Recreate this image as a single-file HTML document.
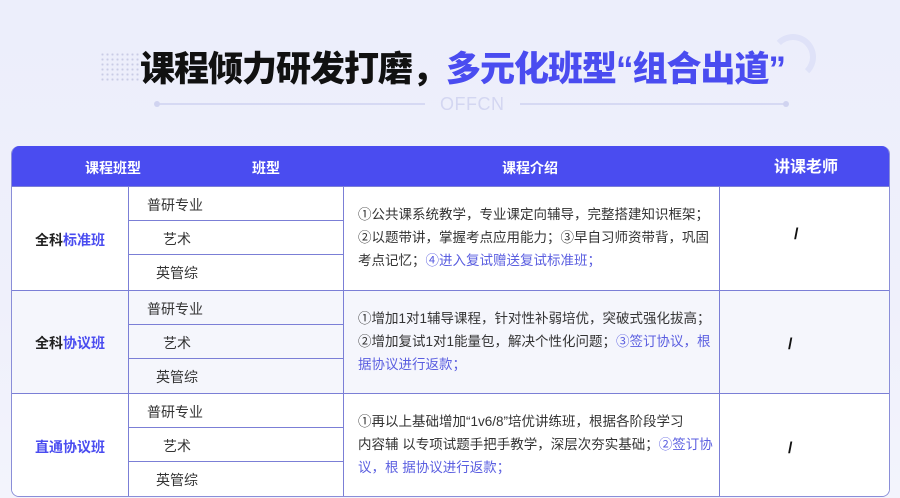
<!DOCTYPE html>
<html><head><meta charset="utf-8"><style>
*{margin:0;padding:0;box-sizing:border-box}
body{width:900px;height:498px;overflow:hidden;background:linear-gradient(180deg,#eceefb 0%,#eff0fb 60%,#f3f4fc 100%);font-family:"Liberation Sans","Noto Sans CJK SC",sans-serif;position:relative}
.title{position:absolute;left:140px;top:46px;white-space:nowrap;font-size:35px;font-weight:900;color:#111;letter-spacing:-1px;line-height:48px}
.title span{color:#4a4cf0}
.dots{position:absolute;left:100px;top:52px;width:40px;height:30px;background-image:radial-gradient(#c9cbe6 1px,transparent 1.2px);background-size:5px 5px}
.ring{position:absolute;left:770px;top:34px;width:46px;height:46px;border-radius:50%;border:6px solid #dfe2f8;border-left-color:transparent;border-bottom-color:transparent}
.line{position:absolute;top:103px;height:2px;background:#d6d9f3}
.dot{position:absolute;top:101px;width:6px;height:6px;border-radius:50%;background:#d0d3f0}
.offcn{position:absolute;left:440px;top:94px;font-size:18px;color:#d3d6f1;letter-spacing:0.5px}
.tbl{position:absolute;left:11px;top:146px;width:879px;height:351px;border-radius:8px;overflow:hidden;background:#fff;border:1px solid #8a8ed8;border-top:none}
.hd{position:absolute;left:0;top:0;width:879px;height:40px;background:#4a4cf0;color:#fff;font-weight:bold;font-size:14px}
.hd div{position:absolute;top:12px}
.row{position:absolute;left:0;width:879px;border-top:1px solid #7b7fd6}
.v{position:absolute;top:40px;bottom:0;width:1px;background:#7b7fd6}
.c1{position:absolute;left:0;width:116px;text-align:center;font-weight:bold;font-size:14px;color:#222}
.b{color:#4a4cf0}
.sub{position:absolute;left:116px;width:215px;height:34px;font-size:14px;color:#333;border-bottom:1px solid #7b7fd6}
.sub span{position:absolute;top:8px}
.intro{position:absolute;left:346px;font-size:13.5px;line-height:23px;color:#333;white-space:nowrap}
.intro .b{color:#5a5ee0}
.sl{position:absolute;font-size:16px;font-weight:bold;color:#111}
</style></head><body>
<div class="dots"></div><div class="ring"></div>
<div class="title">课程倾力研发打磨，<span>多元化班型“组合出道”</span></div>
<div class="line" style="left:157px;width:268px"></div><div class="dot" style="left:154px"></div>
<div class="line" style="left:520px;width:266px"></div><div class="dot" style="left:783px"></div>
<div class="offcn">OFFCN</div>
<div class="tbl">
<div class="hd"><div style="left:73px">课程班型</div><div style="left:240px">班型</div><div style="left:490px">课程介绍</div><div style="left:762px;font-size:16px;top:7px">讲课老师</div></div>
<div class="row" style="top:40px;height:104px;background:#fff"></div>
<div class="row" style="top:144px;height:103px;background:#f5f6fc"></div>
<div class="row" style="top:247px;height:104px;background:#fff"></div>
<div class="v" style="left:116px"></div><div class="v" style="left:331px"></div><div class="v" style="left:707px"></div>
<div class="c1" style="top:84px">全科<span class="b">标准班</span></div>
<div class="c1" style="top:187px">全科<span class="b">协议班</span></div>
<div class="c1 b" style="top:291px">直通协议班</div>
<div class="sub" style="top:41px"><span style="left:19px">普研专业</span></div>
<div class="sub" style="top:75px"><span style="left:35px">艺术</span></div>
<div class="sub" style="top:109px;border-bottom:none"><span style="left:28px">英管综</span></div>
<div class="sub" style="top:145px"><span style="left:19px">普研专业</span></div>
<div class="sub" style="top:179px"><span style="left:35px">艺术</span></div>
<div class="sub" style="top:213px;border-bottom:none"><span style="left:28px">英管综</span></div>
<div class="sub" style="top:248px"><span style="left:19px">普研专业</span></div>
<div class="sub" style="top:282px"><span style="left:35px">艺术</span></div>
<div class="sub" style="top:316px;border-bottom:none"><span style="left:28px">英管综</span></div>
<div class="intro" style="top:57px">①公共课系统教学，专业课定向辅导，完整搭建知识框架；<br>②以题带讲，掌握考点应用能力；③早自习师资带背，巩固<br>考点记忆；<span class="b">④进入复试赠送复试标准班；</span></div>
<div class="intro" style="top:161px">①增加1对1辅导课程，针对性补弱培优，突破式强化拔高；<br>②增加复试1对1能量包，解决个性化问题；<span class="b">③签订协议，根</span><br><span class="b">据协议进行返款；</span></div>
<div class="intro" style="top:264px">①再以上基础增加“1v6/8”培优讲练班，根据各阶段学习<br>内容辅 以专项试题手把手教学，深层次夯实基础；<span class="b">②签订协</span><br><span class="b">议，根 据协议进行返款；</span></div>
<div class="sl" style="left:782px;top:80px">/</div>
<div class="sl" style="left:776px;top:190px">/</div>
<div class="sl" style="left:776px;top:294px">/</div>
</div>
</body></html>
